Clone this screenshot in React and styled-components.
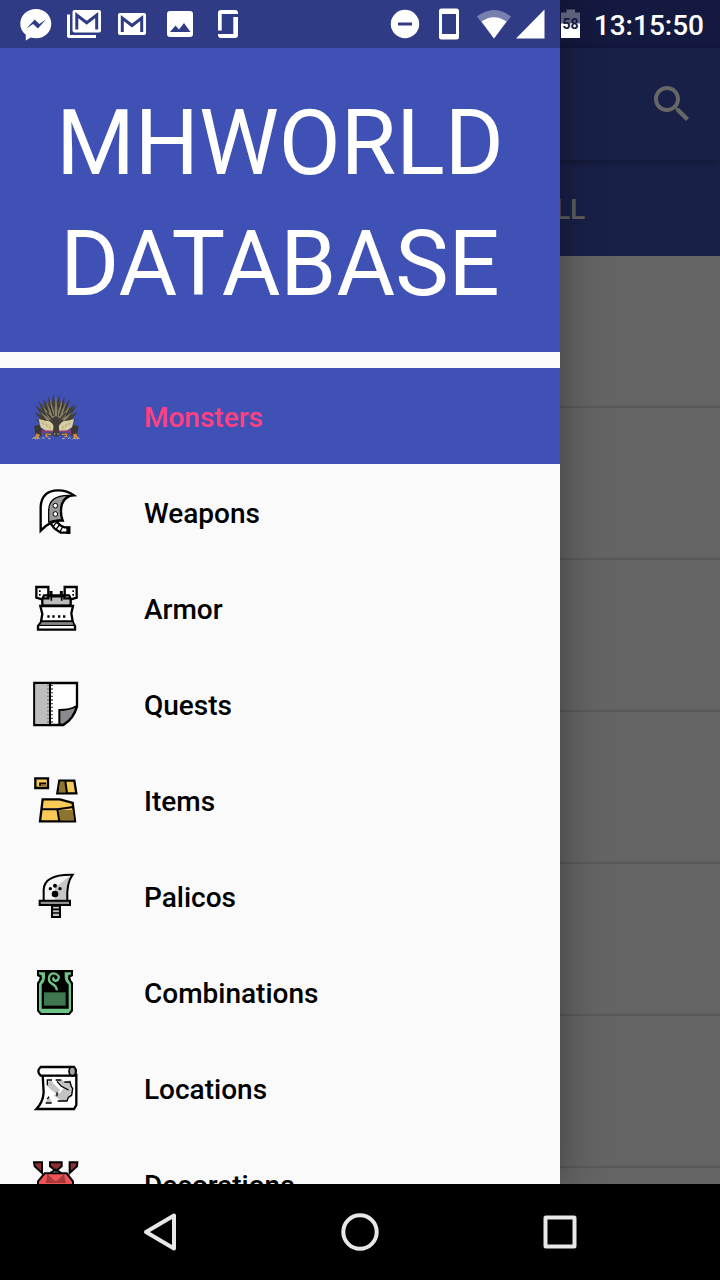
import React from "react";
import styled, { createGlobalStyle, css } from "styled-components";

const GlobalStyle = createGlobalStyle`
  *, *::before, *::after { box-sizing: border-box; }
  body { margin: 0; background: #000; font-family: Roboto, "Liberation Sans", sans-serif; }
  button { border: 0; padding: 0; background: none; color: inherit; font: inherit; cursor: pointer; }
  svg { display: block; flex: none; }
`;

const Screen = styled.div`
  position: relative;
  display: flex;
  flex-direction: column;
  height: 100vh;
  overflow: hidden;
`;

const Stage = styled.div`
  position: relative;
  flex: 1;
  min-height: 0;
  overflow: hidden;
  background: #fafafa;
`;

/* Status bar */

const StatusBar = styled.header`
  position: absolute;
  inset: 0 0 auto;
  z-index: 3;
  display: flex;
  justify-content: space-between;
  height: 48px;
  padding: 0 16px 0 12px;
  color: #fff;
`;

const StatusGroup = styled.div`
  display: flex;
  align-items: flex-start;
`;

const Clock = styled.time`
  margin-left: 5px;
  font-size: 28px;
  font-weight: 500;
  line-height: 52px;
`;

/* Page behind the drawer */

const StatusBacking = styled.div`
  height: 48px;
  background: #303f9f;
`;

const Toolbar = styled.div`
  position: relative;
  display: flex;
  align-items: center;
  justify-content: flex-end;
  height: 112px;
  padding-right: 24px;
  background: #3f51b5;
  color: #fff;
  box-shadow: 0 2px 8px rgba(0, 0, 0, 0.3);
`;

const Tabs = styled.div`
  display: flex;
  height: 96px;
  background: #3f51b5;
`;

const Tab = styled.button`
  flex: 1;
  padding-top: 2px;
  color: #f2f0ea;
  font-size: 28px;
  font-weight: 500;
  text-transform: uppercase;
`;

const MonsterRow = styled.div`
  height: 152px;
  border-bottom: 2px solid #dedede;
`;

const Scrim = styled.div`
  position: absolute;
  inset: 0;
  z-index: 1;
  background: rgba(0, 0, 0, 0.6);
`;

/* Drawer */

const Drawer = styled.nav`
  position: absolute;
  inset: 0 auto 0 0;
  z-index: 2;
  display: flex;
  flex-direction: column;
  width: calc(100% - 160px);
  max-width: 640px;
  background: #fafafa;
  box-shadow: 0 0 40px rgba(0, 0, 0, 0.38);
`;

const DrawerInset = styled.div`
  flex: none;
  height: 48px;
  background: #2f3c85;
`;

const DrawerTitle = styled.h1`
  flex: none;
  margin: 0;
  padding: 35px 32px 27px;
  background: #3f51b5;
  color: #fff;
  font-size: 90px;
  font-weight: 400;
  line-height: 121px;
  text-align: center;
`;

const DrawerList = styled.ul`
  flex: 1;
  min-height: 0;
  margin: 0;
  padding: 16px 0 0;
  overflow: hidden;
  list-style: none;
`;

const DrawerLink = styled.a`
  display: flex;
  align-items: center;
  gap: 64px;
  height: 96px;
  padding: 0 32px;
  color: #000;
  font-size: 28px;
  font-weight: 500;
  line-height: 36px;
  text-decoration: none;
  ${(p) =>
    p.$active &&
    css`
      background: #3f51b5;
      color: #ff4081;
    `}
`;

const DrawerLabel = styled.span`
  padding-top: 4px;
`;

/* System navigation */

const SystemBar = styled.footer`
  flex: none;
  display: flex;
  justify-content: center;
  height: 96px;
  background: #000;
`;

const SystemButton = styled.button`
  display: flex;
  align-items: center;
  justify-content: center;
  width: 200px;
  color: #e8e8e8;
`;

/* Status glyphs */

const StatusGlyph = ({ width = 48, x = 0, children }) => (
  <svg width={width} height="48" viewBox={`${x} 0 ${width} 48`} fill="currentColor" aria-hidden="true">
    {children}
  </svg>
);

const BAR = "#2f3c85";

const Messenger = () => (
  <StatusGlyph>
    <path d="M24 9C15 9 8.300 15.500 8.300 23.700c0 4.500 2 8.300 5.500 11V40.500l5-3c1.600.5 3.400.8 5.200.8 8.700 0 15.300-6.500 15.300-14.600S32.700 9 24 9z" />
    <path d="M14.500 28.500l8.200-9 4.600 4.400 6.600-4.400-8 9-4.800-4.600z" fill={BAR} />
  </StatusGlyph>
);

const Envelope = ({ x, y, w, h }) => (
  <>
    <rect x={x} y={y} width={w} height={h} rx="2" />
    <path
      d={`M${x + 4.300} ${y + h - 3}V${y + 5}L${x + w / 2} ${y + h / 2 + 1.500}L${x + w - 4.300} ${y + 5}V${y + h - 3}`}
      fill="none"
      stroke={BAR}
      strokeWidth="3"
    />
  </>
);

const MailStack = () => (
  <StatusGlyph>
    <path d="M7 14.500h3V35h26v3H9a2 2 0 0 1-2-2z" />
    <Envelope x={12.500} y={10} w={28.500} h={22.500} />
  </StatusGlyph>
);

const Mail = () => (
  <StatusGlyph>
    <Envelope x={10} y={13} w={28} h={22} />
  </StatusGlyph>
);

const Picture = () => (
  <StatusGlyph>
    <rect x="11" y="11" width="26" height="26" rx="3" />
    <path d="M14 32l5.500-6.500 3.500 4 5-6.500 6.500 9z" fill={BAR} />
  </StatusGlyph>
);

const Rotation = () => (
  <StatusGlyph>
    <path d="M14 30.500V13a3 3 0 0 1 3-3H31a3 3 0 0 1 3 3v1H17.700V30.500z" />
    <path d="M34 17v18a3 3 0 0 1-3 3H17a3 3 0 0 1-3-3v-1H29.300V17z" />
  </StatusGlyph>
);

const DoNotDisturb = () => (
  <StatusGlyph width={44} x={384}>
    <circle cx="405" cy="24" r="14.200" />
    <path d="M398 22.500h14v3h-14z" fill={BAR} />
  </StatusGlyph>
);

const Handset = () => (
  <StatusGlyph width={44} x={428}>
    <path fillRule="evenodd" d="M441.500 8.500h15a2.500 2.500 0 0 1 2.500 2.500v26a2.500 2.500 0 0 1-2.500 2.500h-15a2.500 2.500 0 0 1-2.500-2.500V11a2.500 2.500 0 0 1 2.500-2.500zM442 14v20h14V14z" />
  </StatusGlyph>
);

const Wifi = () => (
  <StatusGlyph width={42} x={472}>
    <path d="M494 38.500L477 16.500Q494 3.500 511 16.500z" opacity="0.350" />
    <path d="M494 38.500L481.500 21.500Q494 13 506.500 21.500z" />
  </StatusGlyph>
);

const Signal = () => (
  <StatusGlyph width={40} x={514}>
    <path d="M544.500 9.500v29H516z" />
  </StatusGlyph>
);

const Battery = () => (
  <StatusGlyph width={35} x={554}>
    <path d="M561 12.500h5.500V9.500h8.500v3h5V38h-19z" opacity="0.320" />
    <path d="M561 23.500h19V38h-19z" />
    <text x="570.500" y="29" fill="#131841" fontSize="14" fontWeight="700" textAnchor="middle">
      58
    </text>
  </StatusGlyph>
);

const SearchIcon = () => (
  <svg width="48" height="48" viewBox="0 0 24 24" fill="currentColor" aria-hidden="true">
    <path d="M15.500 14h-.79l-.28-.27C15.410 12.590 16 11.110 16 9.500 16 5.910 13.090 3 9.500 3S3 5.910 3 9.500 5.910 16 9.500 16c1.610 0 3.090-.59 4.230-1.570l.27.28v.79l5 4.990L20.490 19l-4.990-5zm-6 0C7.010 14 5 11.990 5 9.500S7.010 5 9.500 5 14 7.010 14 9.500 11.990 14 9.500 14z" />
  </svg>
);

/* Drawer artwork, drawn on a grid of three units to the pixel */

const Art = ({ top, children }) => (
  <svg width="48" height="48" viewBox={`36 ${top} 144 144`} stroke="#000" strokeWidth="7" aria-hidden="true">
    {children}
  </svg>
);

const SPIKES = [
  [45, 76], [42, 97], [46, 118], [54, 62], [68, 55], [84, 50], [99, 42],
  [118, 42], [134, 49], [150, 56], [164, 72], [172, 76], [174, 97], [170, 118],
];
const STREAKS = [[66, 76], [60, 96], [79, 66], [90, 57], [108, 48], [127, 57], [139, 66], [152, 76], [158, 96]];

const wedge = ([x, y], spread) => {
  const dx = 108 - x;
  const dy = 140 - y;
  const len = Math.hypot(dx, dy);
  const px = (-dy / len) * spread;
  const py = (dx / len) * spread;
  const mx = x + dx * 0.45;
  const my = y + dy * 0.45;
  return `M${x} ${y}L${mx + px} ${my + py}L108 144L${mx - px} ${my - py}z`;
};

const MonsterArt = () => (
  <Art top={36}>
    <g stroke="none">
      <path d="M76 72Q108 58 142 74L160 122L142 152H74L56 122z" fill="#5c564a" />
      {SPIKES.map((p) => (
        <path key={p.join()} d={wedge(p, 8)} fill="#423e38" />
      ))}
      {STREAKS.map((p) => (
        <path key={p.join()} d={wedge(p, 4)} fill="#8a816b" />
      ))}
      <path d="M90 78l10 30M128 76l-10 32M80 98l18 22M138 98l-18 22" stroke="#38342f" strokeWidth="4" />
      <path d="M108 108L80 126L108 146L138 126z" fill="#423e38" />
      <path d="M42 138l14-3 10 8-2 24-10 4-8-8z M176 138l-14-3-10 8 2 24 10 4 8-8z" fill="#3b3734" />
      <path d="M56 117Q74 122 88 124Q100 130 105 148L98 154L78 152L62 142z M162 117Q144 122 130 124Q118 130 113 148L120 154L140 152L156 142z" fill="#d6cda1" />
      <path d="M68 127l4 8M78 131l4 10M88 138l2 8M150 127l-4 8M140 131l-4 10M130 138l-2 8" stroke="#aaa27c" strokeWidth="3" />
      <path d="M104 116h10l5 48-11 8-11-8z" fill="#403b36" />
      <path d="M66 162V153H98M152 162V153H120" fill="none" stroke="#b92d56" strokeWidth="3" />
      <path d="M72 158h24v8H74zM122 158h24l-2 8h-22z" fill="#4a4037" />
      <path d="M50 160l10 4-6 12H42zM168 160l-10 4 6 12h12zM76 160l18 1-2 4-13-1 8 8H76zM142 160l-18 1 2 4 13-1-8 8h11z" fill="#d38b31" />
      <path d="M36 178l6-6 4 6M52 178l3-5 5 5M66 176l4-4 3 5M84 176h8M126 176h8M144 177l4-5 4 4M158 178l4-5 4 5M172 178l3-5 5 5" fill="none" stroke="#ece4bd" strokeWidth="2" />
      <path d="M102 159h4v5h-4zM112 159h4v5h-4z" fill="#9b9272" />
    </g>
  </Art>
);

const WeaponArt = () => (
  <Art top={24}>
    <path d="M90 128L105 121L124 138L134 142H148V158H122L104 146z" fill="#fff" />
    <path d="M99 140l10-12M108 148l10-13M120 155l8-14" strokeWidth="4" />
    <path d="M139 140h11v22h-11z" stroke="none" fill="#000" />
    <path d="M62 152V80Q65 32 114 31Q142 31 162 46Q136 47 126 72Q119 98 128 122Q94 118 62 152z" fill="#fff" stroke="none" />
    <path d="M86 126V92Q86 46 146 46Q130 56 125 74Q119 98 128 121Q104 118 86 126z" fill="#999" strokeWidth="4" />
    <path d="M62 152V80Q65 32 114 31Q142 31 162 46Q136 47 126 72Q119 98 128 122Q94 118 62 152z" fill="none" />
    <g fill="#fff" strokeWidth="3">
      <circle cx="106" cy="77" r="7" />
      <circle cx="106" cy="102" r="7" />
    </g>
  </Art>
);

const ArmorArt = () => (
  <Art top={312}>
    <path d="M67 355h18v-8h48v8h19v22H67z" fill="#bdbdbd" />
    <path d="M93 333v15h31v-15" fill="none" strokeWidth="9" />
    <path d="M49 321H85V346H72L66 358L49 353z M170 321H134V346H147L153 358L170 353z" fill="#fff" />
    <path d="M80 346h14v16M139 346h-14v16" fill="none" strokeWidth="5" />
    <path d="M61 378H159L154 400L158 425H63L67 402z" fill="#fff" />
    <path d="M65 425H157L165 438V449H54V438z" fill="#fff" />
    <path d="M65 427h92l4 7H60z" stroke="none" fill="#858585" />
    <path d="M55 436h109" strokeWidth="4" />
    <path d="M82 406h7v7h-7zM97 406h7v7h-7zM114 406h7v7h-7zM129 406h7v7h-7zM57 331h5v5h-5zM57 342h5v5h-5zM157 331h5v5h-5zM157 342h5v5h-5z" stroke="none" fill="#000" />
  </Art>
);

const QuestArt = () => (
  <Art top={30}>
    <path d="M43 39H171V110Q160 147 130 165H43z" fill="#fff" />
    <path d="M46 42h42v120H46z" fill="#bdbdbd" stroke="none" />
    <path d="M96 44v118" stroke="#555" strokeWidth="6" strokeDasharray="4 7" />
    <path d="M84 44v118" stroke="#777" strokeWidth="5" strokeDasharray="4 7" />
    <path d="M90 42v123" strokeWidth="6" />
    <path d="M118 163V120Q150 120 170 108Q162 145 130 164z" fill="#8b8b8f" strokeWidth="6" />
  </Art>
);

const ItemArt = () => (
  <Art top={318}>
    <path d="M46 325h38v29H46z" fill="#f4c955" />
    <path d="M79 346H61" fill="none" stroke="#8c7430" strokeWidth="6" />
    <path d="M78 340H60v8" fill="none" strokeWidth="5" />
    <path d="M118 332H163L169 370H112z" fill="#f4c955" />
    <path d="M120 335h16l4 32h-24z" fill="#8c7430" stroke="none" />
    <path d="M136 334l5 35" strokeWidth="6" />
    <path d="M68 388L120 388L158 399L165 454H60z" fill="#f9ca58" />
    <path d="M114 420h45l3 31h-42z" fill="#8c7430" stroke="none" />
    <path d="M65 418H112L160 411M112 418l6 36" fill="none" strokeWidth="6" />
  </Art>
);

const PalicoArt = () => (
  <Art top={36}>
    <path d="M71 120V88Q74 42 158 44Q139 69 142 120z" fill="#f4f4f4" stroke="none" />
    <path d="M105 119V82L150 48Q139 72 142 119z" fill="#c6c6c6" stroke="none" />
    <path d="M71 120V88Q74 42 158 44Q139 69 142 120" fill="none" strokeWidth="6" />
    <g stroke="none" fill="#000">
      <circle cx="105" cy="102" r="10" />
      <circle cx="91" cy="86" r="5" />
      <circle cx="105" cy="77" r="6" />
      <circle cx="120" cy="86" r="5" />
    </g>
    <path d="M59 122h91v13H59z" fill="#919191" strokeWidth="6" />
    <path d="M96 137h24v34H96z" fill="#bdbdbd" strokeWidth="6" />
    <path d="M96 148h24M96 159h24" strokeWidth="5" />
  </Art>
);

const CombinationArt = () => (
  <Art top={324}>
    <path d="M51 330H159V348L151 352L153 360L159 368V453L149 465H61L51 453V368L57 360L59 352L51 348z" fill="#000" stroke="none" />
    <path d="M57 337H75V352L73 364L65 374V446H146V374L137 364L134 352V337H153V343L145 346L144 357L153 371V450L146 459H64L57 450V371L66 357L65 346L57 343z" fill="#6dc486" stroke="none" />
    <path d="M72 397h65v40H72z" fill="#417750" stroke="none" />
    <path d="M110 391Q111 379 95 371Q83 362 88 349Q94 336 108 342Q121 348 114 359Q107 366 100 359Q99 354 103 353" fill="none" stroke="#6dc486" strokeWidth="7" />
  </Art>
);

const LocationArt = () => (
  <Art top={27}>
    <path d="M68 60H169V150L162 162H49Q69 142 71 112z" fill="#fff" />
    <path d="M62 36H162Q173 48 162 62H62Q48 49 62 36z" fill="#fff" />
    <ellipse cx="157" cy="49" rx="10" ry="13" fill="#a5a5a5" strokeWidth="5" />
    <path d="M80 82l13-5 27 29-9 12-18-14-12-12zM111 78l14-3 10 5 17-5 4 20 4 5-4 26-12 2-2 9-16 2-14-10-11-8 13-8 5 2 12-15-19-19zM76 142l12-16 8 16z" fill="#c3c3c3" stroke="none" />
    <path d="M111 79l13 15 22 11" fill="none" strokeWidth="4" />
    <path d="M82 91v-16h14M107 75h17M133 81h17l4 14 4 5-3 20-10 7-4 11H113M77 144h18M111 112v12M82 132l5-7" fill="none" strokeWidth="4" />
  </Art>
);

const DecorationArt = () => (
  <Art top={315}>
    <g strokeWidth="6">
      <path d="M42 322H66V354L44 334z M172 322H149V354L171 334z M90 322H125V334L108 348L90 334z" fill="#8e2e33" />
      <path d="M74 355H140L159 379V400L108 450L54 400V379z" fill="#f05455" />
      <path d="M90 354l17-10 17 10" fill="none" />
    </g>
    <path d="M82 359L78 381H103zM132 359L138 381H112z" fill="#a9383d" stroke="none" />
    <path d="M82 359L107 381L132 359M78 382H138" fill="none" stroke="#6e2227" strokeWidth="2" />
  </Art>
);

const SECTIONS = [
  { name: "Monsters", Icon: MonsterArt, active: true },
  { name: "Weapons", Icon: WeaponArt },
  { name: "Armor", Icon: ArmorArt },
  { name: "Quests", Icon: QuestArt },
  { name: "Items", Icon: ItemArt },
  { name: "Palicos", Icon: PalicoArt },
  { name: "Combinations", Icon: CombinationArt },
  { name: "Locations", Icon: LocationArt },
  { name: "Decorations", Icon: DecorationArt },
];

const SYSTEM_KEYS = [
  { name: "Back", shape: <path d="M38 7.500v33L10 24z" /> },
  { name: "Home", shape: <circle cx="24" cy="24" r="16.700" /> },
  { name: "Recent apps", shape: <rect x="9.500" y="9.500" width="29" height="29" rx="0.500" /> },
];

export default function App() {
  return (
    <Screen>
      <GlobalStyle />
      <StatusBar>
        <StatusGroup>
          <Messenger />
          <MailStack />
          <Mail />
          <Picture />
          <Rotation />
        </StatusGroup>
        <StatusGroup>
          <DoNotDisturb />
          <Handset />
          <Wifi />
          <Signal />
          <Battery />
          <Clock>13:15:50</Clock>
        </StatusGroup>
      </StatusBar>

      <Stage>
        <main>
          <StatusBacking />
          <Toolbar>
            <button type="button" aria-label="Search">
              <SearchIcon />
            </button>
          </Toolbar>
          <Tabs>
            <Tab type="button" aria-label="Large" />
            <Tab type="button">Small</Tab>
          </Tabs>
          {Array.from({ length: 7 }, (_, i) => (
            <MonsterRow key={i} />
          ))}
        </main>
        <Scrim />
        <Drawer aria-label="Sections">
          <DrawerInset />
          <DrawerTitle>MHWORLD DATABASE</DrawerTitle>
          <DrawerList>
            {SECTIONS.map(({ name, Icon, active }) => (
              <li key={name}>
                <DrawerLink href={`#${name.toLowerCase()}`} $active={active} aria-current={active ? "page" : undefined}>
                  <Icon />
                  <DrawerLabel>{name}</DrawerLabel>
                </DrawerLink>
              </li>
            ))}
          </DrawerList>
        </Drawer>
      </Stage>

      <SystemBar>
        {SYSTEM_KEYS.map(({ name, shape }) => (
          <SystemButton key={name} type="button" aria-label={name}>
            <svg width="48" height="48" viewBox="0 0 48 48" fill="none" stroke="currentColor" strokeWidth="4" strokeLinejoin="round" aria-hidden="true">
              {shape}
            </svg>
          </SystemButton>
        ))}
      </SystemBar>
    </Screen>
  );
}
